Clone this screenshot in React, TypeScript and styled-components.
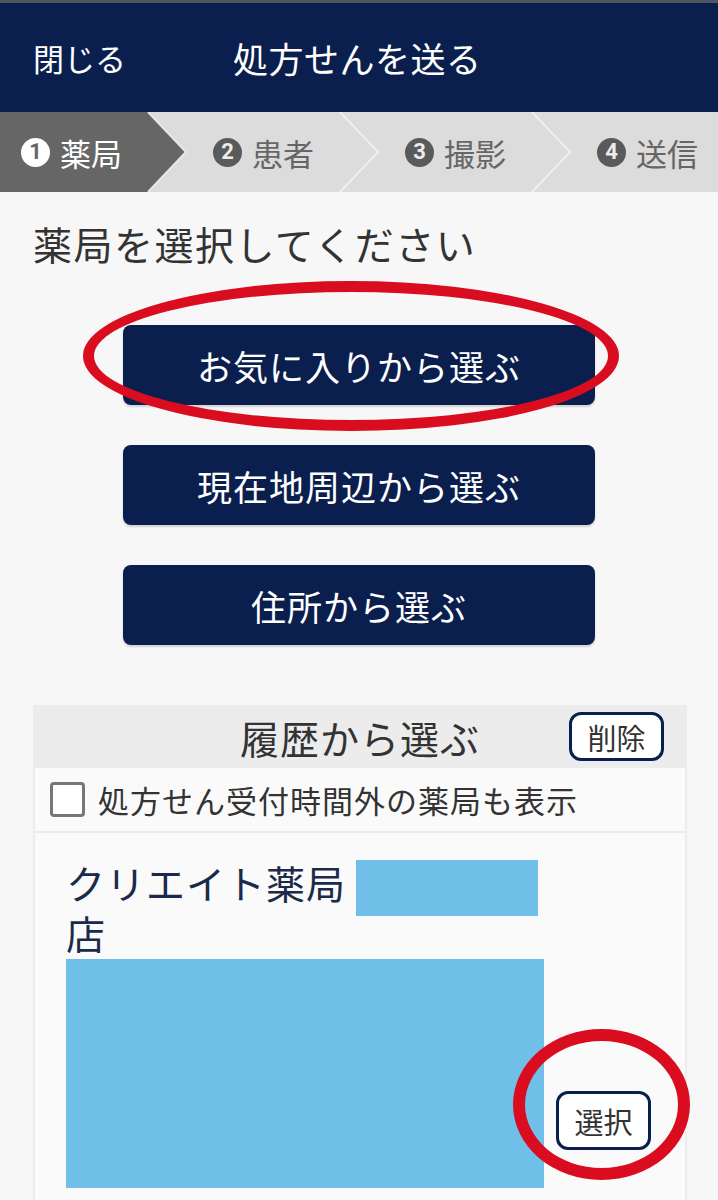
import React, { FC } from 'react';
import styled, { createGlobalStyle, css } from 'styled-components';

const NAVY = '#0b1f4e';
const RED = '#d90d1f';
const REDACT = '#6fbfe8';

const GlobalStyle = createGlobalStyle`
  html, body {
    margin: 0;
    padding: 0;
    background: #f7f7f7;
  }
  body {
    font-family: "Noto Sans CJK JP", "Noto Sans", sans-serif;
    overflow: hidden;
  }
`;

const Page = styled.div`
  width: 718px;
  min-height: 1200px;
  background: #f7f7f7;
`;

const Header = styled.header`
  height: 109px;
  border-top: 3px solid #50555f;
  background: ${NAVY};
  color: #fff;
  display: grid;
  grid-template-columns: 200px 1fr;
  align-items: center;
  padding-left: 33px;
  box-sizing: content-box;
`;

const Close = styled.span`
  font-size: 31px;
`;

const HeaderTitle = styled.h1`
  margin: 0;
  font-size: 35px;
  font-weight: 400;
  letter-spacing: 0.5px;
`;

const Steps = styled.nav`
  height: 80px;
  background: #dcdcdc;
  display: flex;
  overflow: hidden;
`;

const Step = styled.div<{ active?: boolean }>`
  position: relative;
  flex: 0 0 192px;
  height: 100%;
  display: flex;
  align-items: center;
  padding-left: 21px;
  box-sizing: border-box;
  font-size: 31px;
  color: ${(p) => (p.active ? '#fff' : '#666')};

  ${(p) =>
    p.active &&
    css`
      &::before {
        content: '';
        position: absolute;
        inset: 0;
        background: #666;
        clip-path: polygon(0 0, 148px 0, 186px 50%, 148px 100%, 0 100%);
      }
    `}
`;

const StepLabel = styled.span`
  position: relative;
  z-index: 1;
  display: flex;
  align-items: center;
  gap: 10px;
`;

const StepNum = styled.span<{ active?: boolean }>`
  width: 29px;
  height: 29px;
  border-radius: 50%;
  background: ${(p) => (p.active ? '#fff' : '#5a5a5a')};
  color: ${(p) => (p.active ? '#666' : '#ececec')};
  font-family: "Roboto", "Liberation Sans", sans-serif;
  font-size: 22px;
  font-weight: 700;
  display: flex;
  align-items: center;
  justify-content: center;
  line-height: 1;
`;

const Chevron = styled.svg`
  position: absolute;
  left: 146px;
  top: 0;
  width: 44px;
  height: 80px;
  z-index: 2;
`;

const Content = styled.main`
  padding-top: 26px;
`;

const Title = styled.h2`
  margin: 0 0 0 33px;
  font-size: 39px;
  line-height: 50px;
  font-weight: 400;
  letter-spacing: 1.5px;
  color: #333;
`;

const ButtonList = styled.div`
  display: flex;
  flex-direction: column;
  align-items: center;
  gap: 40px;
  margin-top: 57px;
`;

const ButtonWrap = styled.div`
  position: relative;
`;

const MainButton = styled.button`
  width: 472px;
  height: 80px;
  border: none;
  border-radius: 8px;
  background: ${NAVY};
  color: #fff;
  font-family: inherit;
  font-size: 35px;
  letter-spacing: 1px;
  padding: 0;
  box-shadow: 0 2px 2px rgba(0, 0, 0, 0.15);
`;

const Ring = styled.div<{ thickness: number }>`
  position: absolute;
  border: ${(p) => p.thickness}px solid ${RED};
  border-radius: 50%;
  pointer-events: none;
  box-sizing: border-box;
  z-index: 5;
`;

const Panel = styled.section`
  margin: 60px 31px 0 33px;
  background: #ececec;
  padding: 0 2px;
`;

const PanelHeader = styled.div`
  height: 63px;
  display: grid;
  grid-template-columns: 1fr auto 1fr;
  align-items: center;
`;

const PanelTitle = styled.h3`
  grid-column: 2;
  margin: 0;
  font-size: 39px;
  font-weight: 400;
  letter-spacing: 1px;
  color: #333;
`;

const OutlineButton = styled.button<{ tall?: boolean }>`
  width: 95px;
  height: ${(p) => (p.tall ? 59 : 49)}px;
  border: 3px solid ${NAVY};
  border-radius: 12px;
  background: #fff;
  color: #333;
  font-family: inherit;
  font-size: 29px;
  padding: 0;
  display: flex;
  align-items: center;
  justify-content: center;
`;

const HeaderAction = styled(OutlineButton)`
  grid-column: 3;
  justify-self: end;
  margin-right: 21px;
`;

const Row = styled.div`
  background: #fafafa;
  margin-bottom: 2px;
`;

const CheckRow = styled(Row)`
  height: 63px;
  display: flex;
  align-items: center;
  gap: 13px;
  padding-left: 15px;
`;

const Checkbox = styled.span`
  width: 35px;
  height: 35px;
  border: 3px solid #777;
  border-radius: 4px;
  box-sizing: border-box;
  background: #fff;
`;

const CheckLabel = styled.span`
  font-size: 31px;
  letter-spacing: 1px;
  color: #333;
`;

const Item = styled(Row)`
  padding: 24px 0 0 31px;
  min-height: 400px;
`;

const ItemBody = styled.div`
  display: flex;
`;

const ItemMain = styled.div`
  width: 478px;
`;

const Name = styled.div`
  font-size: 39px;
  line-height: 50px;
  letter-spacing: 1px;
  color: #1b2a4a;
  width: 478px;
`;

const Redact = styled.span<{ w: number; h: number }>`
  display: inline-block;
  width: ${(p) => p.w}px;
  height: ${(p) => p.h}px;
  background: ${REDACT};
  vertical-align: top;
`;

const InlineRedact = styled(Redact)`
  margin: 3px 0 -9px 10px;
`;

const Address = styled(Redact)`
  display: block;
  margin-top: 2px;
`;

const ItemSide = styled.div`
  flex: 1;
  display: flex;
  align-items: flex-end;
  padding: 0 0 38px 12px;
`;

const SelectWrap = styled.div`
  position: relative;
`;

const Extra = styled.div`
  margin-top: 10px;
  font-size: 34px;
  line-height: 40px;
  color: #1b2a4a;
`;

const steps = ['薬局', '患者', '撮影', '送信'];

const App: FC = () => (
  <Page>
    <GlobalStyle />
    <Header>
      <Close>閉じる</Close>
      <HeaderTitle>処方せんを送る</HeaderTitle>
    </Header>

    <Steps>
      {steps.map((label, i) => (
        <Step key={label} active={i === 0}>
          <StepLabel>
            <StepNum active={i === 0}>{i + 1}</StepNum>
            {label}
          </StepLabel>
          {i < steps.length - 1 && (
            <Chevron viewBox="0 0 44 80">
              <polyline
                points="2,0 40,40 2,80"
                fill="none"
                stroke={i === 0 ? '#e8e8e8' : '#efefef'}
                strokeWidth="2"
              />
            </Chevron>
          )}
        </Step>
      ))}
    </Steps>

    <Content>
      <Title>薬局を選択してください</Title>

      <ButtonList>
        <ButtonWrap>
          <MainButton>お気に入りから選ぶ</MainButton>
          <Ring thickness={11} style={{ left: -40, top: -44, width: 536, height: 150 }} />
        </ButtonWrap>
        <MainButton>現在地周辺から選ぶ</MainButton>
        <MainButton>住所から選ぶ</MainButton>
      </ButtonList>

      <Panel>
        <PanelHeader>
          <PanelTitle>履歴から選ぶ</PanelTitle>
          <HeaderAction>削除</HeaderAction>
        </PanelHeader>

        <CheckRow>
          <Checkbox />
          <CheckLabel>処方せん受付時間外の薬局も表示</CheckLabel>
        </CheckRow>

        <Item>
          <ItemBody>
            <ItemMain>
              <Name>
                クリエイト薬局
                <InlineRedact w={182} h={56} />
                店
              </Name>
              <Address w={478} h={229} />
            </ItemMain>
            <ItemSide>
              <SelectWrap>
                <OutlineButton tall>選択</OutlineButton>
                <Ring thickness={12} style={{ left: -43, top: -62, width: 177, height: 151 }} />
              </SelectWrap>
            </ItemSide>
          </ItemBody>
          <Extra>処方せん受付時間内です</Extra>
        </Item>
      </Panel>
    </Content>
  </Page>
);

export default App;
